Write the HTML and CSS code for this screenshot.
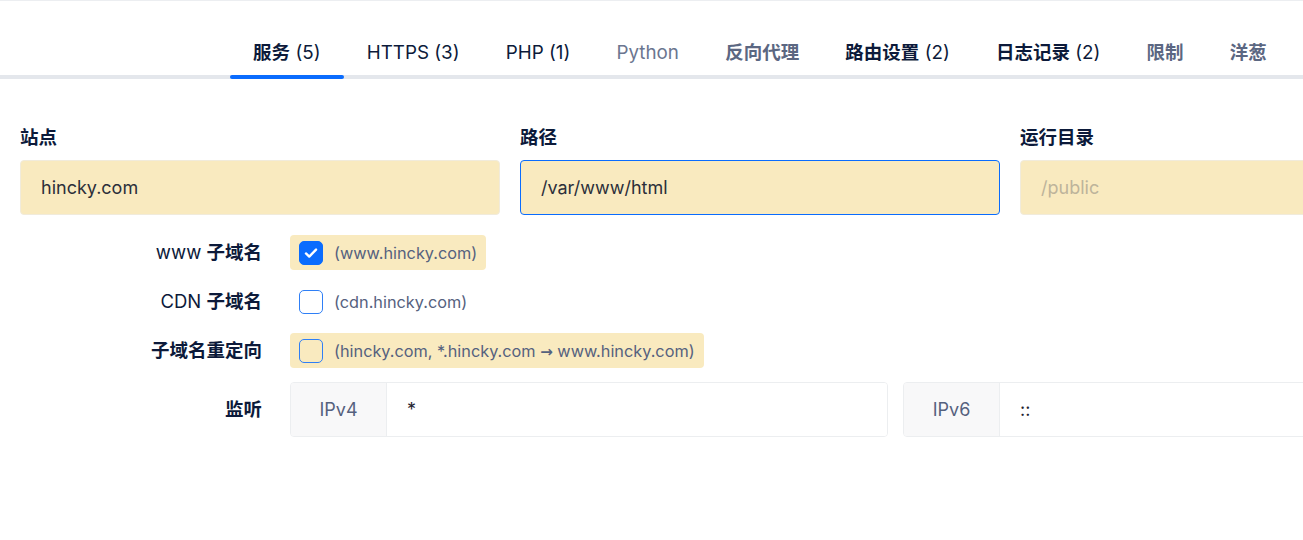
FILE: index.html
```html
<!DOCTYPE html>
<html lang="zh">
<head>
<meta charset="utf-8">
<title>站点设置</title>
<link rel="stylesheet" href="styles.css">
</head>
<body>
<div class="page">
  <nav class="tabs">
    <a class="tab active"><span class="cjk">服务</span> (5)</a>
    <a class="tab">HTTPS (3)</a>
    <a class="tab">PHP (1)</a>
    <a class="tab muted light">Python</a>
    <a class="tab muted"><span class="cjk">反向代理</span></a>
    <a class="tab"><span class="cjk">路由设置</span> (2)</a>
    <a class="tab"><span class="cjk">日志记录</span> (2)</a>
    <a class="tab muted"><span class="cjk">限制</span></a>
    <a class="tab muted"><span class="cjk">洋葱</span></a>
  </nav>

  <form class="form">
    <div class="fields">
      <div class="field">
        <label class="field-label">站点</label>
        <input class="text-input" type="text" value="hincky.com">
      </div>
      <div class="field">
        <label class="field-label">路径</label>
        <input class="text-input focused" type="text" value="/var/www/html">
      </div>
      <div class="field">
        <label class="field-label">运行目录</label>
        <input class="text-input" type="text" placeholder="/public">
      </div>
    </div>

    <div class="row">
      <div class="row-label">www <span class="cjk">子域名</span></div>
      <div class="row-body">
        <label class="check highlight">
          <span class="box checked">
            <svg viewBox="0 0 24 24" width="24" height="24"><path d="M6.5 12.5l3.6 3.4 7.4-7.6" fill="none" stroke="#fff" stroke-width="2.6" stroke-linecap="round" stroke-linejoin="round"/></svg>
          </span>
          <span class="check-text">(www.hincky.com)</span>
        </label>
      </div>
    </div>

    <div class="row">
      <div class="row-label">CDN <span class="cjk">子域名</span></div>
      <div class="row-body">
        <label class="check">
          <span class="box"></span>
          <span class="check-text">(cdn.hincky.com)</span>
        </label>
      </div>
    </div>

    <div class="row">
      <div class="row-label"><span class="cjk">子域名重定向</span></div>
      <div class="row-body">
        <label class="check highlight">
          <span class="box"></span>
          <span class="check-text">(hincky.com, *.hincky.com <span class="arrow">→</span> www.hincky.com)</span>
        </label>
      </div>
    </div>

    <div class="row listen">
      <div class="row-label"><span class="cjk">监听</span></div>
      <div class="row-body groups">
        <div class="group">
          <span class="addon">IPv4</span>
          <input class="group-input" type="text" value="*">
        </div>
        <div class="group">
          <span class="addon">IPv6</span>
          <input class="group-input" type="text" value="::">
        </div>
      </div>
    </div>
  </form>
</div>
</body>
</html>
```

FILE: styles.css
```css
* { box-sizing: border-box; }

html, body {
  margin: 0;
  padding: 0;
  background: #fff;
  overflow: hidden;
}

body {
  font-family: Inter, "Noto Sans CJK SC", sans-serif;
  color: #0c1a3a;
  width: 1303px;
  height: 540px;
}

.page {
  border-top: 1px solid #eceef1;
  width: 1600px;
}

.tabs {
  display: flex;
  padding: 28px 0 0 230px;
  border-bottom: 4px solid #e4e7ec;
  font-size: 18.8px;
  line-height: 27px;
}

.tab {
  position: relative;
  padding: 10px 23.1px 9px;
  color: #0c1a3a;
  font-weight: 400;
  white-space: nowrap;
}

.tab .cjk { font-weight: 700; font-size: 18.5px; }

.tab.muted { color: #5b6782; }
.tab.light { color: #6b7690; font-weight: 400; }

.tab.active::after {
  content: "";
  position: absolute;
  left: 0;
  right: 0;
  bottom: -4px;
  height: 4px;
  border-radius: 2px;
  background: #0a6cfe;
}

.form {
  padding: 45px 20px 0 20px;
}

.fields {
  display: flex;
  gap: 20px;
}

.field {
  width: 480px;
  flex-shrink: 0;
  display: flex;
  flex-direction: column;
}

.field-label {
  font-size: 18.5px;
  line-height: 27px;
  font-weight: 700;
  margin-bottom: 9px;
}

.text-input {
  height: 55px;
  width: 100%;
  border: 1px solid #f1ebdb;
  border-radius: 4px;
  background: #f9eabf;
  padding: 0 20px;
  font-family: Inter, "Noto Sans CJK SC", sans-serif;
  font-size: 18px;
  color: #2c2f3a;
  outline: none;
}

.text-input::placeholder { color: #bdb49b; }

.text-input.focused { border-color: #0a6cfe; }

.row {
  display: grid;
  grid-template-columns: 242px 1fr;
  column-gap: 28px;
  align-items: center;
  margin-top: 14px;
}

.fields + .row { margin-top: 20px; }

.row-label {
  text-align: right;
  font-size: 18.5px;
  line-height: 27px;
  color: #0c1a3a;
}

.row-label .cjk { font-weight: 700; }

.row-body { display: flex; }

.check {
  display: inline-flex;
  align-items: center;
  gap: 11px;
  height: 35px;
  padding: 0 9px;
  border-radius: 4px;
}

.check.highlight { background: #f9eabf; }

.box {
  width: 24px;
  height: 24px;
  border: 1px solid #2f7ff6;
  border-radius: 5px;
  display: flex;
  align-items: center;
  justify-content: center;
}

.box.checked {
  background: #0a6cfe;
  border-color: #0a6cfe;
}

.box svg { display: block; }

.check-text {
  font-size: 16.3px;
  color: #55617e;
}

.arrow {
  font-family: "DejaVu Sans", sans-serif;
  font-weight: 700;
  font-size: 15px;
}

.groups { gap: 15px; }

.group {
  width: 598px;
  flex-shrink: 0;
  height: 55px;
  display: flex;
  border: 1px solid #eceef0;
  border-radius: 4px;
  overflow: hidden;
}

.addon {
  width: 96px;
  flex-shrink: 0;
  background: #f8f8f9;
  border-right: 1px solid #eceef0;
  display: flex;
  align-items: center;
  justify-content: center;
  font-size: 18px;
  color: #55617e;
}

.group-input {
  flex: 1;
  border: none;
  outline: none;
  background: #fff;
  padding: 0 20px;
  font-family: Inter, "Noto Sans CJK SC", sans-serif;
  font-size: 18px;
  color: #1f2330;
}
```
